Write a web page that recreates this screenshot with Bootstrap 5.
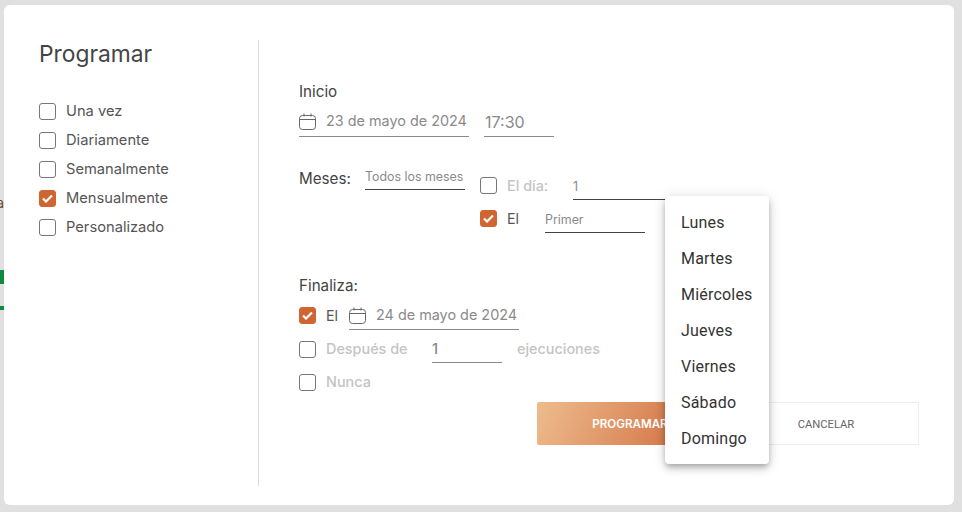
<!DOCTYPE html>
<html lang="es">
<head>
    <meta charset="UTF-8">
    <meta name="viewport" content="width=device-width, initial-scale=1.0">
    <title>Programar</title>
    <link href="https://cdn.jsdelivr.net/npm/bootstrap@5.3.1/dist/css/bootstrap.min.css" rel="stylesheet">
    <style>
        body { background: #e0e0e0; height: 512px; overflow: hidden; font-family: "Inter", "Noto Sans", sans-serif; color: #444; font-size: 14.7px; }
        .bg-frag { position: absolute; left: 0; width: 4px; background: #0e8a43; }
        .bg-char { position: absolute; left: 0; width: 4px; overflow: hidden; direction: rtl; color: #6b4a3a; font-size: 14px; line-height: 16px; }
        .sched-panel { position: relative; margin: 5px 8px 7px 4px; height: 500px; background: #fff; border-radius: 6px; }
        .side-col { width: 254px; padding: 35px 0 0 35px; }
        .side-title { font-size: 22.8px; font-weight: 400; color: #444; margin-bottom: 29px; line-height: 28px; }
        .main-col { margin-top: 35px; height: 446px; border-left: 1px solid #ddd; padding: 42px 35px 0 40px; }
        .chk-row { height: 29px; display: flex; align-items: center; gap: 10px; color: #555; }
        .chk-box { width: 17px; height: 17px; border: 1px solid #777; border-radius: 3px; background: #fff; flex: none; display: flex; align-items: center; justify-content: center; }
        .chk-box.is-on { background: #cf6631; border-color: #cf6631; }
        .sec-label { color: #444; font-size: 15.2px; line-height: 20px; }
        .line-field { border-bottom: 1px solid #8a8a8a; color: #8a8a8a; display: flex; align-items: flex-start; white-space: nowrap; }
        .line-dark { border-bottom-color: #444; }
        .muted-txt { color: #c4c4c4; font-weight: 500; font-size: 14.4px; white-space: nowrap; }
        .date-w { width: 170px; gap: 10px; line-height: 24px; font-size: 14.4px; }
        .date-w svg { margin-top: 4px; flex: none; }
        .time-w { width: 70px; font-size: 16px; line-height: 27px; height: 28px; padding-left: 1px; }
        .small-f { width: 100px; font-size: 12.4px; height: 23px; line-height: 19px; }
        .months-f { height: 22px; line-height: 18px; }
        .opt-col { line-height: 18px; margin-left: 10px; }
        .btn-sched { width: 186px; height: 43px; border-radius: 2px; border: 0; color: #fff; font-size: 11.6px; font-weight: 600; padding: 2px 0 0; background: linear-gradient(115deg, #eebc8d, #cd6335); }
        .btn-sched:hover { color: #fff; }
        .btn-cancel { width: 186px; height: 43px; border-radius: 0; border: 1px solid #eee; background: #fff; color: #666; font-size: 11.2px; padding: 4px 0 0; font-family: Roboto, sans-serif; }
        .day-menu { position: absolute; left: 665px; top: 196px; width: 104px; height: 268px; background: #fff; border-radius: 4px; padding: 9px 0 0; box-shadow: 0 3px 5px -1px rgba(0,0,0,.2), 0 5px 8px rgba(0,0,0,.14), 0 1px 14px rgba(0,0,0,.12); font-family: Roboto, sans-serif; font-size: 16px; letter-spacing: .2px; color: #333; z-index: 5; }
        .day-item { height: 36px; line-height: 36px; padding-left: 16px; }
    </style>
</head>
<body>
<div class="bg-char" style="top:195px">a</div>
<div class="bg-frag" style="top:270px;height:14px"></div>
<div class="bg-frag" style="top:306px;height:4px"></div>

<div class="sched-panel d-flex">
    <div class="side-col">
        <h1 class="side-title">Programar</h1>
        <div class="chk-row"><span class="chk-box"></span>Una vez</div>
        <div class="chk-row"><span class="chk-box"></span>Diariamente</div>
        <div class="chk-row"><span class="chk-box"></span>Semanalmente</div>
        <div class="chk-row"><span class="chk-box is-on"><svg width="11" height="9" viewBox="0 0 11 9"><path d="M1 4.5 4 7.5 10 1.5" fill="none" stroke="#fff" stroke-width="2.2"/></svg></span>Mensualmente</div>
        <div class="chk-row"><span class="chk-box"></span>Personalizado</div>
    </div>
    <div class="main-col flex-grow-1">
        <div class="sec-label" style="margin-bottom:7px">Inicio</div>
        <div class="d-flex align-items-end" style="gap:15px">
            <div class="line-field date-w" style="height:28px">
                <svg width="17" height="17" viewBox="0 0 17 17" fill="none" stroke="#666"><rect x=".5" y="2.5" width="16" height="14" rx="3"/><path d="M.5 6.5h16M5 .5v3M12 .5v3"/></svg>
                <span>23 de mayo de 2024</span>
            </div>
            <div class="line-field time-w">17:30</div>
        </div>

        <div class="d-flex" style="margin-top:31px">
            <div class="sec-label" style="width:66px;line-height:22px">Meses:</div>
            <div class="line-field line-dark small-f months-f">Todos los meses</div>
            <div class="d-flex flex-column" style="margin:9px 0 0 15px;gap:10px">
                <div class="d-flex">
                    <span class="chk-box"></span>
                    <span class="opt-col muted-txt" style="width:66px">El día:</span>
                    <div class="line-field line-dark small-f">1</div>
                </div>
                <div class="d-flex">
                    <span class="chk-box is-on"><svg width="11" height="9" viewBox="0 0 11 9"><path d="M1 4.5 4 7.5 10 1.5" fill="none" stroke="#fff" stroke-width="2.2"/></svg></span>
                    <span class="opt-col" style="width:38px;color:#555;font-size:14.3px">El</span>
                    <div class="line-field line-dark small-f">Primer</div>
                </div>
            </div>
        </div>

        <div class="sec-label" style="margin-top:43px">Finaliza:</div>
        <div class="d-flex" style="margin-top:7px;height:27px">
            <span class="chk-box is-on" style="margin-top:4px"><svg width="11" height="9" viewBox="0 0 11 9"><path d="M1 4.5 4 7.5 10 1.5" fill="none" stroke="#fff" stroke-width="2.2"/></svg></span>
            <span style="margin:4px 0 0 10px;width:23px;line-height:18px;color:#555;font-size:14.3px">El</span>
            <div class="line-field date-w">
                <svg width="17" height="17" viewBox="0 0 17 17" fill="none" stroke="#666"><rect x=".5" y="2.5" width="16" height="14" rx="3"/><path d="M.5 6.5h16M5 .5v3M12 .5v3"/></svg>
                <span>24 de mayo de 2024</span>
            </div>
        </div>
        <div class="d-flex" style="margin-top:11px;height:22px">
            <span class="chk-box"></span>
            <span class="muted-txt" style="margin-left:10px;width:106px;line-height:16px">Después de</span>
            <div class="line-field" style="width:70px;line-height:16px;font-weight:500">1</div>
            <span class="muted-txt" style="margin-left:15px;line-height:16px">ejecuciones</span>
        </div>
        <div class="d-flex" style="margin-top:11px;height:17px">
            <span class="chk-box"></span>
            <span class="muted-txt" style="margin-left:10px;line-height:16px">Nunca</span>
        </div>

        <div class="d-flex justify-content-end" style="margin-top:11px;gap:10px">
            <button type="button" class="btn btn-sched">PROGRAMAR</button>
            <button type="button" class="btn btn-cancel">CANCELAR</button>
        </div>
    </div>
</div>

<div class="day-menu">
    <div class="day-item">Lunes</div>
    <div class="day-item">Martes</div>
    <div class="day-item">Miércoles</div>
    <div class="day-item">Jueves</div>
    <div class="day-item">Viernes</div>
    <div class="day-item">Sábado</div>
    <div class="day-item">Domingo</div>
</div>
</body>
</html>
